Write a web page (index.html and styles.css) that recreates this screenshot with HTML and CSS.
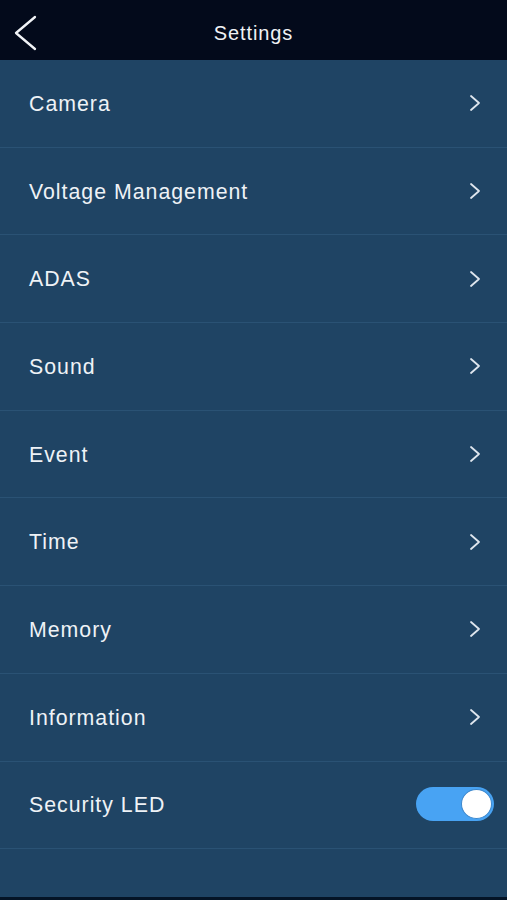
FILE: index.html
```html
<!DOCTYPE html>
<html>
<head>
<meta charset="utf-8">
<link rel="stylesheet" href="styles.css">
</head>
<body>
<div class="app">
  <header class="topbar">
    <button class="back" aria-label="Back">
      <svg width="26" height="36" viewBox="0 0 26 36"><path d="M23 2 L4 18 L23 34" fill="none" stroke="#f2f4f7" stroke-width="2.3" stroke-linecap="round" stroke-linejoin="round"/></svg>
    </button>
    <h1 class="title">Settings</h1>
  </header>
  <ul class="list">
    <li class="row"><span class="label">Camera</span><svg class="chev" width="12" height="18" viewBox="0 0 12 18"><path d="M2 2 L10 9 L2 16" fill="none" stroke="#dfe6ee" stroke-width="1.8" stroke-linecap="round" stroke-linejoin="round"/></svg></li>
    <li class="row"><span class="label">Voltage Management</span><svg class="chev" width="12" height="18" viewBox="0 0 12 18"><path d="M2 2 L10 9 L2 16" fill="none" stroke="#dfe6ee" stroke-width="1.8" stroke-linecap="round" stroke-linejoin="round"/></svg></li>
    <li class="row"><span class="label">ADAS</span><svg class="chev" width="12" height="18" viewBox="0 0 12 18"><path d="M2 2 L10 9 L2 16" fill="none" stroke="#dfe6ee" stroke-width="1.8" stroke-linecap="round" stroke-linejoin="round"/></svg></li>
    <li class="row"><span class="label">Sound</span><svg class="chev" width="12" height="18" viewBox="0 0 12 18"><path d="M2 2 L10 9 L2 16" fill="none" stroke="#dfe6ee" stroke-width="1.8" stroke-linecap="round" stroke-linejoin="round"/></svg></li>
    <li class="row"><span class="label">Event</span><svg class="chev" width="12" height="18" viewBox="0 0 12 18"><path d="M2 2 L10 9 L2 16" fill="none" stroke="#dfe6ee" stroke-width="1.8" stroke-linecap="round" stroke-linejoin="round"/></svg></li>
    <li class="row"><span class="label">Time</span><svg class="chev" width="12" height="18" viewBox="0 0 12 18"><path d="M2 2 L10 9 L2 16" fill="none" stroke="#dfe6ee" stroke-width="1.8" stroke-linecap="round" stroke-linejoin="round"/></svg></li>
    <li class="row"><span class="label">Memory</span><svg class="chev" width="12" height="18" viewBox="0 0 12 18"><path d="M2 2 L10 9 L2 16" fill="none" stroke="#dfe6ee" stroke-width="1.8" stroke-linecap="round" stroke-linejoin="round"/></svg></li>
    <li class="row"><span class="label">Information</span><svg class="chev" width="12" height="18" viewBox="0 0 12 18"><path d="M2 2 L10 9 L2 16" fill="none" stroke="#dfe6ee" stroke-width="1.8" stroke-linecap="round" stroke-linejoin="round"/></svg></li>
    <li class="row"><span class="label">Security LED</span><span class="toggle"><span class="knob"></span></span></li>
  </ul>
</div>
</body>
</html>
```
FILE: styles.css
```css
* { box-sizing: border-box; }
html, body { margin: 0; padding: 0; }
body {
  background: #1f4464;
  font-family: "Liberation Sans", Arial, sans-serif;
  color: #eef2f6;
}
.app {
  height: 900px;
  display: flex;
  flex-direction: column;
  background: #1f4464;
  border-bottom: 3px solid #041426;
}
.topbar {
  height: 60px;
  background: #030a1b;
  display: flex;
  align-items: center;
  justify-content: center;
  position: relative;
}
.back {
  position: absolute;
  left: 12px;
  top: 15px;
  background: none;
  border: 0;
  padding: 0;
  width: 26px;
  height: 36px;
}
.title {
  margin: 0;
  font-size: 20px;
  font-weight: normal;
  letter-spacing: 0.9px;
  color: #f0f2f5;
  padding-left: 0;
  padding-top: 7px;
}
.list {
  list-style: none;
  margin: 0;
  padding: 0;
}
.row {
  height: 87.7px;
  display: flex;
  align-items: center;
  justify-content: space-between;
  padding: 0 26px 0 29px;
  border-bottom: 1.5px solid #2a5274;
}
.label {
  font-size: 21.3px;
  letter-spacing: 1px;
  color: #eef2f6;
  padding-top: 2px;
}
.toggle {
  width: 78px;
  height: 34px;
  border-radius: 17px;
  background: #48a3f3;
  display: flex;
  align-items: center;
  justify-content: flex-end;
  padding: 2px;
  margin-right: -13px;
  margin-top: -2px;
}
.knob {
  width: 31px;
  height: 30px;
  border-radius: 50%;
  background: #ffffff;
  border: 1px solid #3a86cc;
}
```
